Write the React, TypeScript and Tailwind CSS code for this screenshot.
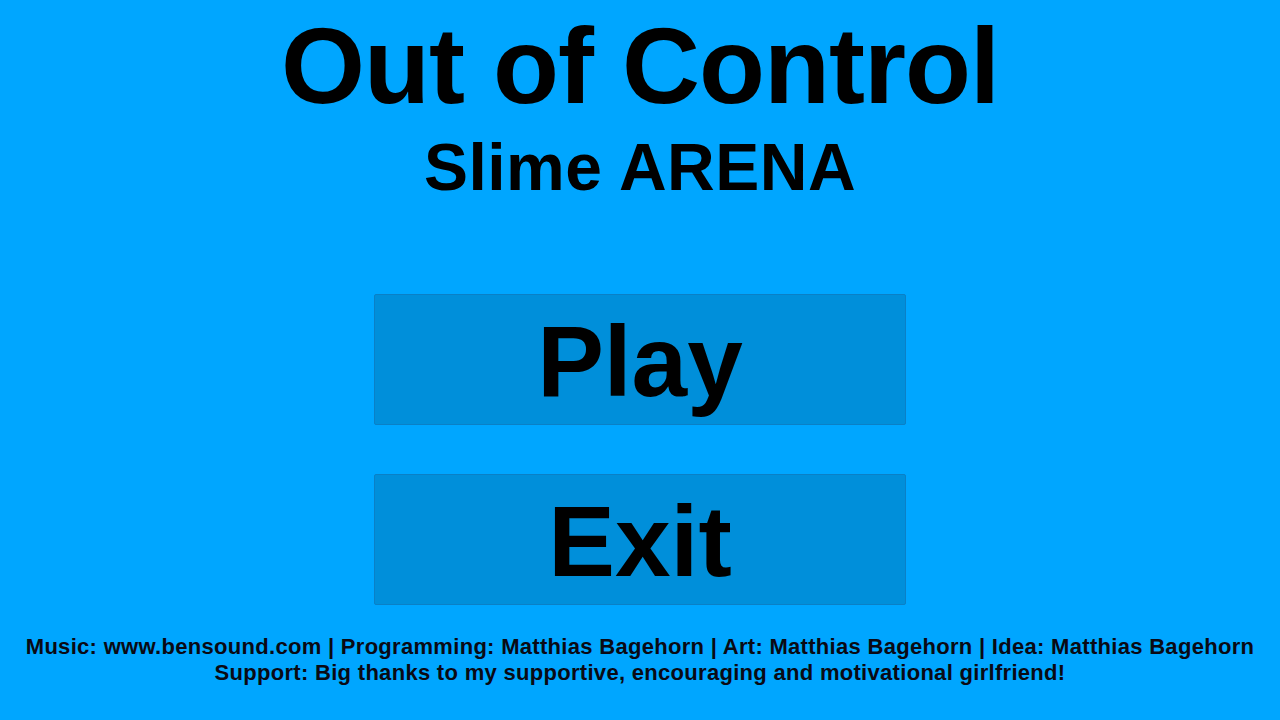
export default function App() {
  return (
    <div
      className="w-[1280px] h-[720px] bg-[#00a6ff] flex flex-col items-center text-black overflow-hidden"
      style={{ fontFamily: '"Liberation Sans", Arial, sans-serif' }}
    >
      <h1 className="mt-[12px] text-[108px] leading-none font-bold tracking-[-1px] whitespace-nowrap">Out of Control</h1>
      <h2 className="mt-[14px] text-[66px] leading-none font-bold tracking-[0.5px] whitespace-nowrap">Slime ARENA</h2>
      <div className="mt-[94px] flex flex-col gap-[49px]">
        <button className="w-[532px] h-[131px] box-border bg-[#008fda] border border-[#0a80c6] rounded-[2px] flex justify-center pt-[16px] text-[100px] leading-none font-bold">
          Play
        </button>
        <button className="w-[532px] h-[131px] box-border bg-[#008fda] border border-[#0a80c6] rounded-[2px] flex justify-center pt-[16px] text-[100px] leading-none font-bold">
          Exit
        </button>
      </div>
      <div className="mt-[29px] flex flex-col items-center text-[22px] leading-[26px] font-bold tracking-[0.3px] whitespace-nowrap text-[#0a0a14]">
        <p>Music: www.bensound.com | Programming: Matthias Bagehorn | Art: Matthias Bagehorn | Idea: Matthias Bagehorn</p>
        <p>Support: Big thanks to my supportive, encouraging and motivational girlfriend!</p>
      </div>
    </div>
  );
}
